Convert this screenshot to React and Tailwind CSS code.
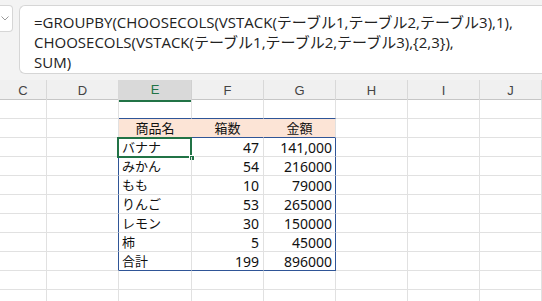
const COLS = ["C", "D", "E", "F", "G", "H", "I", "J"];

const ROWS = [
  ["バナナ", "47", "141,000"],
  ["みかん", "54", "216000"],
  ["もも", "10", "79000"],
  ["りんご", "53", "265000"],
  ["レモン", "30", "150000"],
  ["柿", "5", "45000"],
  ["合計", "199", "896000"],
];

const GRID = "grid grid-cols-[47px_72px_73px_72px_72px_72px_72px_1fr]";
const JP = "font-['Noto_Sans_CJK_JP','Noto_Sans',sans-serif]";
const GRIDLINE = "border-[#e1e1e1]";

function Cell({ children, className = "" }) {
  return (
    <div className={`h-[19px] border-b border-r ${GRIDLINE} ${className}`}>
      {children}
    </div>
  );
}

function EmptyRow() {
  return (
    <div className={GRID}>
      {COLS.map((c) => (
        <Cell key={c} />
      ))}
    </div>
  );
}

export default function App() {
  return (
    <div className="w-[542px] h-[301px] overflow-hidden bg-white">
      {/* Formula bar */}
      <div className="h-[80px] bg-[#f3f3f3] flex gap-[6px] pt-[5px] pb-[6px]">
        <div className="w-[13px] h-[27px] bg-white border border-l-0 border-[#d6d6d6] rounded-r-[4px] flex items-center justify-center">
          <svg width="8" height="5" viewBox="0 0 8 5" className="ml-[-3px]">
            <path d="M0.5 0.5 L4 4 L7.5 0.5" fill="none" stroke="#9a9a9a" strokeWidth="1" />
          </svg>
        </div>
        <div className="flex-1 bg-white border border-r-0 border-[#d6d6d6] rounded-l-[6px] pl-[14px] pt-[6px] text-[15px] leading-[20px] text-[#222] font-['Open_Sans','Noto_Sans_CJK_JP',sans-serif] whitespace-nowrap">
          <div>=GROUPBY(CHOOSECOLS(VSTACK(テーブル1,テーブル2,テーブル3),1),</div>
          <div>CHOOSECOLS(VSTACK(テーブル1,テーブル2,テーブル3),{"{2,3}"}),</div>
          <div>SUM)</div>
        </div>
      </div>

      {/* Column headers */}
      <div className={`${GRID} h-[20px] bg-[#f0f0f0] border-b border-[#c6c6c6] font-['Liberation_Sans',sans-serif] text-[13px] text-[#444]`}>
        {COLS.map((c) =>
          c === "E" ? (
            <div
              key={c}
              className="flex items-center justify-center bg-[#d9d9d9] border-b-2 border-[#217346] text-[#217346] border-r border-r-[#d0d0d0]"
            >
              {c}
            </div>
          ) : (
            <div
              key={c}
              className="flex items-center justify-center border-r border-[#d8d8d8]"
            >
              {c}
            </div>
          )
        )}
      </div>

      {/* Row 1 */}
      <div className={GRID}>
        {COLS.map((c) => (
          <Cell
            key={c}
            className={["E", "F", "G"].includes(c) ? "!border-b-[#2f5597]" : ""}
          />
        ))}
      </div>

      {/* Table header */}
      <div className={`${GRID} ${JP} text-[13px] text-[#111]`}>
        <Cell />
        <Cell />
        <Cell className="bg-[#fce4d6] !border-b-[#2f5597] !border-r-[#fce4d6] flex items-center justify-center">
          商品名
        </Cell>
        <Cell className="bg-[#fce4d6] !border-b-[#2f5597] !border-r-[#fce4d6] flex items-center justify-center">
          箱数
        </Cell>
        <Cell className="bg-[#fce4d6] !border-b-[#2f5597] flex items-center justify-center">
          金額
        </Cell>
        <Cell />
        <Cell />
        <Cell />
      </div>

      {/* Table body */}
      {ROWS.map((r, i) => {
        const last = i === ROWS.length - 1;
        const bottom = last ? "!border-b-[#2f5597]" : "";
        return (
          <div key={r[0]} className={`${GRID} text-[#111]`}>
            <Cell />
            <Cell className="!border-r-[#2f5597]" />
            <Cell className={`relative ${bottom} ${JP} text-[13px] pl-[3px] flex items-center`}>
              {r[0]}
              {i === 0 && (
                <div className="absolute left-[-2px] top-[-1px] w-[75px] h-[21px] border-2 border-[#217346]">
                  <div className="absolute right-[-5px] bottom-[-5px] w-[6px] h-[6px] bg-[#217346] border border-white" />
                </div>
              )}
            </Cell>
            <Cell className={`${bottom} font-['Noto_Sans',sans-serif] text-[14px] pr-[4px] flex items-center justify-end`}>
              {r[1]}
            </Cell>
            <Cell className={`${bottom} !border-r-[#2f5597] font-['Noto_Sans',sans-serif] text-[14px] pr-[3px] flex items-center justify-end`}>
              {r[2]}
            </Cell>
            <Cell />
            <Cell />
            <Cell />
          </div>
        );
      })}

      <EmptyRow />
      <EmptyRow />
    </div>
  );
}
